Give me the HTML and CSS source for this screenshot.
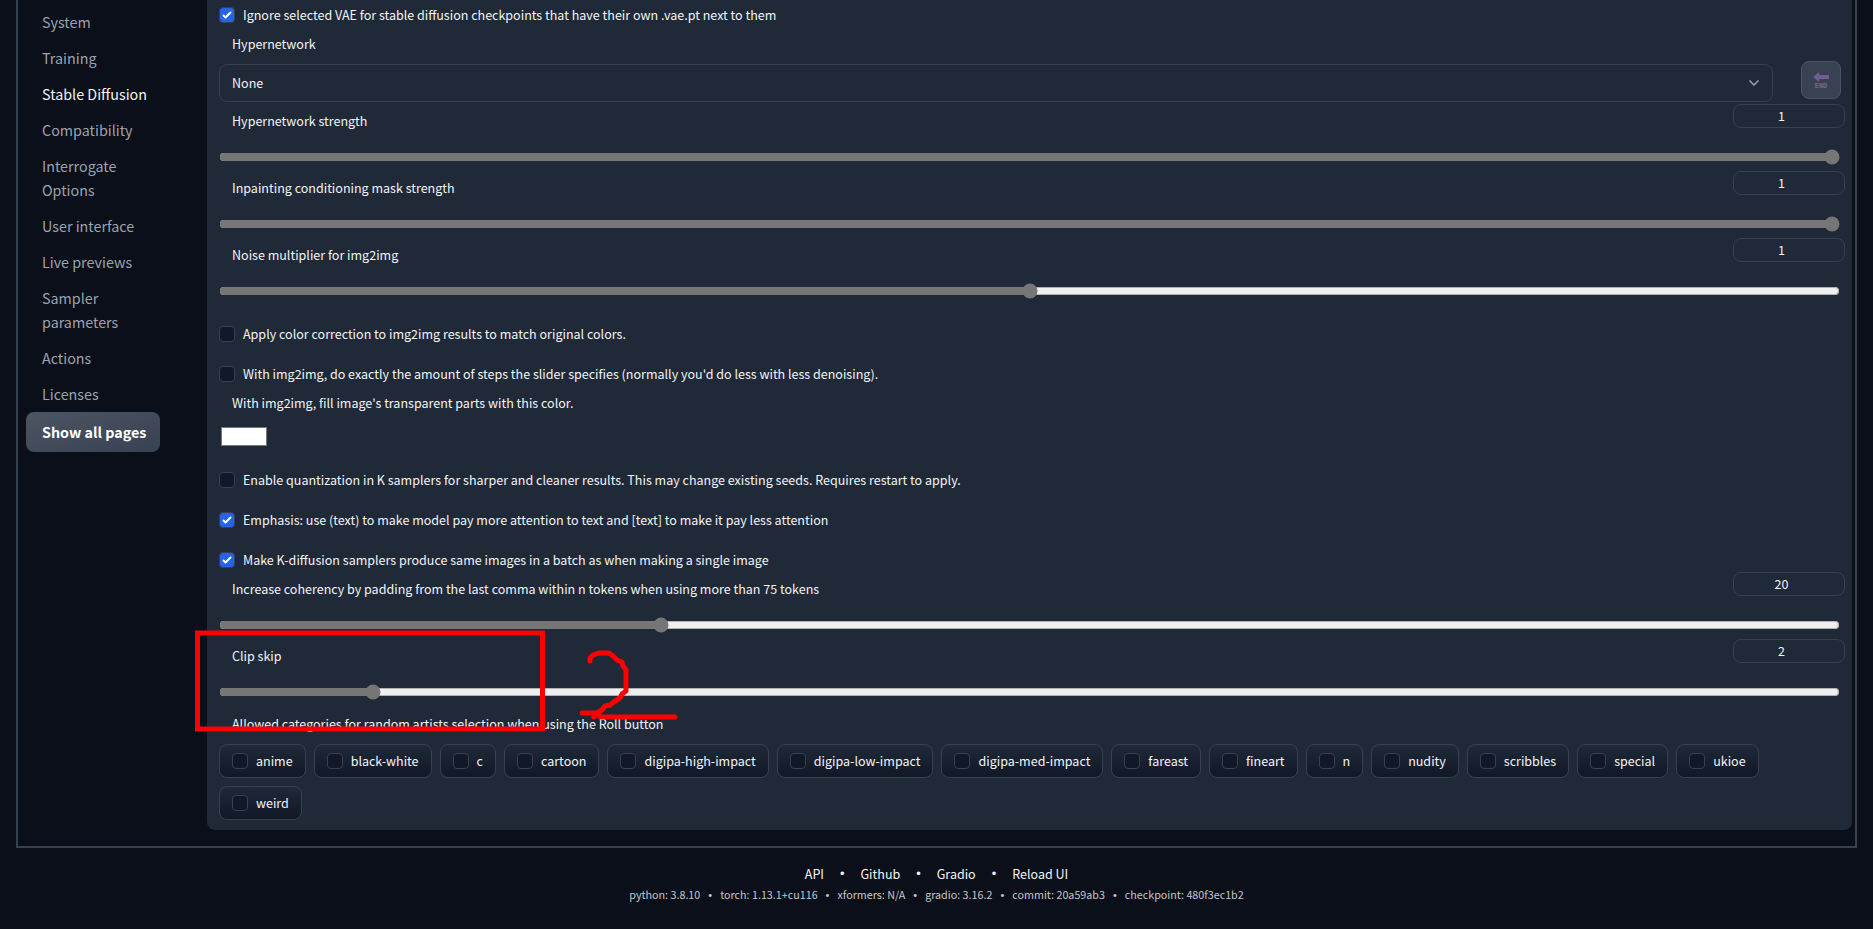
FILE: index.html
```html
<!DOCTYPE html>
<html lang="en">
<head>
  <meta charset="UTF-8" />
  <meta name="viewport" content="width=device-width, initial-scale=1.0"/>
  <title>Stable Diffusion</title>
  <link rel="stylesheet" href="styles.css">
</head>
<body>

<main class="settings">
  <nav class="tabs">
    <button>System</button>
    <button>Training</button>
    <button class="active">Stable Diffusion</button>
    <button>Compatibility</button>
    <button>Interrogate Options</button>
    <button>User interface</button>
    <button>Live previews</button>
    <button>Sampler parameters</button>
    <button>Actions</button>
    <button>Licenses</button>
    <button class="show-all">Show all pages</button>
  </nav>

  <section class="panel">
    <div class="checks">
      <label class="check"><input type="checkbox" checked> Ignore selected VAE for stable diffusion checkpoints that have their own .vae.pt next to them</label>
    </div>

    <label class="title" for="hypernetwork">Hypernetwork</label>
    <div class="select-row">
      <div class="select-wrap">
        <select id="hypernetwork">
          <option>None</option>
        </select>
        <svg class="chevron" width="12" height="8" viewBox="0 0 12 8"><path d="M1.5 1.5L6 6L10.5 1.5" fill="none" stroke="#9ca3af" stroke-width="1.5"/></svg>
      </div>
      <button class="tool" aria-label="Refresh">
        <svg width="18" height="20" viewBox="0 0 18 20">
          <path d="M1 7L7 2V5H17V9H7V12Z" fill="#6b5f95"/>
          <text x="9" y="18" text-anchor="middle">END</text>
        </svg>
      </button>
    </div>

    <div class="slider">
      <div class="slider-head">
        <label for="hyperStrength">Hypernetwork strength</label>
        <input type="number" value="1" aria-label="Hypernetwork strength value">
      </div>
      <input type="range" id="hyperStrength" min="0" max="1" step="0.01" value="1">
    </div>
    <div class="slider">
      <div class="slider-head">
        <label for="maskStrength">Inpainting conditioning mask strength</label>
        <input type="number" value="1" aria-label="Inpainting conditioning mask strength value">
      </div>
      <input type="range" id="maskStrength" min="0" max="1" step="0.01" value="1">
    </div>
    <div class="slider">
      <div class="slider-head">
        <label for="noise">Noise multiplier for img2img</label>
        <input type="number" value="1" aria-label="Noise multiplier value">
      </div>
      <input type="range" id="noise" min="0.5" max="1.5" step="0.01" value="1">
    </div>

    <div class="checks after-slider">
      <label class="check"><input type="checkbox"> Apply color correction to img2img results to match original colors.</label>
      <label class="check"><input type="checkbox"> With img2img, do exactly the amount of steps the slider specifies (normally you'd do less with less denoising).</label>
    </div>

    <label class="title" for="fillColor">With img2img, fill image's transparent parts with this color.</label>
    <input type="color" id="fillColor" value="#ffffff">

    <div class="checks">
      <label class="check"><input type="checkbox"> Enable quantization in K samplers for sharper and cleaner results. This may change existing seeds. Requires restart to apply.</label>
      <label class="check"><input type="checkbox" checked> Emphasis: use (text) to make model pay more attention to text and [text] to make it pay less attention</label>
      <label class="check"><input type="checkbox" checked> Make K-diffusion samplers produce same images in a batch as when making a single image</label>
    </div>

    <div class="slider first">
      <div class="slider-head">
        <label for="commaPadding">Increase coherency by padding from the last comma within n tokens when using more than 75 tokens</label>
        <input type="number" value="20" aria-label="Comma padding value">
      </div>
      <input type="range" id="commaPadding" min="0" max="74" value="20">
    </div>
    <div class="slider marked">
      <div class="slider-head">
        <label for="clipSkip">Clip skip</label>
        <input type="number" value="2" aria-label="Clip skip value">
      </div>
      <input type="range" id="clipSkip" min="1" max="12" value="2">
      <!-- red marker drawn over the setting -->
      <svg class="marker" width="490" height="110" viewBox="0 0 490 110">
        <rect x="2.5" y="3" width="345" height="96"/>
        <path d="M395 31V28L398 25L404 23H414L418 26L422 30L427 32L428 36L431 40V61L427 64L425 68L420 71L415 75L410 76L407 80L402 83L399 87M387 83H402L405 87H480"/>
      </svg>
    </div>

    <fieldset>
      <legend>Allowed categories for random artists selection when using the Roll button</legend>
      <div class="chips">
        <label class="chip"><input type="checkbox"> anime</label>
        <label class="chip"><input type="checkbox"> black-white</label>
        <label class="chip"><input type="checkbox"> c</label>
        <label class="chip"><input type="checkbox"> cartoon</label>
        <label class="chip"><input type="checkbox"> digipa-high-impact</label>
        <label class="chip"><input type="checkbox"> digipa-low-impact</label>
        <label class="chip"><input type="checkbox"> digipa-med-impact</label>
        <label class="chip"><input type="checkbox"> fareast</label>
        <label class="chip"><input type="checkbox"> fineart</label>
        <label class="chip"><input type="checkbox"> n</label>
        <label class="chip"><input type="checkbox"> nudity</label>
        <label class="chip"><input type="checkbox"> scribbles</label>
        <label class="chip"><input type="checkbox"> special</label>
        <label class="chip"><input type="checkbox"> ukioe</label>
        <label class="chip"><input type="checkbox"> weird</label>
      </div>
    </fieldset>
  </section>
</main>

<footer>
  <div class="links">
    <a href="#">API</a>
    <span class="dot">•</span>
    <a href="#">Github</a>
    <span class="dot">•</span>
    <a href="#">Gradio</a>
    <span class="dot">•</span>
    <a href="#">Reload UI</a>
  </div>
  <div class="versions">
    <span>python: 3.8.10</span>
    <span class="dot">•</span>
    <span>torch: 1.13.1+cu116</span>
    <span class="dot">•</span>
    <span>xformers: N/A</span>
    <span class="dot">•</span>
    <span>gradio: 3.16.2</span>
    <span class="dot">•</span>
    <span>commit: 20a59ab3</span>
    <span class="dot">•</span>
    <span>checkpoint: 480f3ec1b2</span>
  </div>
</footer>

</body>
</html>
```
FILE: styles.css
```css
* {
  box-sizing: border-box;
}
body {
  margin: 0;
  background: #0b0f19;
  color: #f3f4f6;
  font-family: 'Source Sans Pro', 'Noto Sans CJK SC', sans-serif;
  font-size: 14px;
  font-size-adjust: 0.486; /* keep the x-height of Source Sans on fallback fonts */
  line-height: 20px;
}
button, input, select {
  font: inherit;
  font-size-adjust: inherit;
  color: inherit;
}
.settings {
  display: flex;
  margin: 0 16px;
  padding: 0 3px 16px 8px;
  border: 2px solid #374151;
  border-top: none;
}
.tabs {
  width: 134px;
  margin-right: 47px;
  padding-top: 4px;
  flex-shrink: 0;
}
.tabs button {
  display: block;
  width: 100%;
  padding: 6px 12px 6px 16px;
  border: none;
  background: none;
  color: #9ca3af;
  font-size: 16px;
  line-height: 24px;
  text-align: left;
  cursor: pointer;
}
.tabs button.active {
  color: #f3f4f6;
}
.tabs button.show-all {
  padding: 8px 0 8px 16px;
  border-radius: 8px;
  background: linear-gradient(to bottom right, #4b5563, #374151);
  color: white;
  font-weight: bold;
}
.panel {
  flex: 1;
  min-width: 0;
  padding: 5px 7px 10px 12px;
  background: #1f2937;
  border-radius: 0 0 8px 8px;
}
.checks {
  display: flex;
  flex-direction: column;
  gap: 20px;
}
.checks.after-slider {
  margin-top: 25px;
}
.check {
  display: flex;
  align-items: center;
  gap: 8px;
}
input[type="checkbox"] {
  appearance: none;
  flex-shrink: 0;
  width: 16px;
  height: 16px;
  margin: 0;
  border: 1px solid #374151;
  border-radius: 4px;
  background: #111827;
}
input[type="checkbox"]:checked {
  background: #2563eb url("data:image/svg+xml,%3Csvg viewBox='0 0 16 16' fill='white' xmlns='http://www.w3.org/2000/svg'%3E%3Cpath d='M12.207 4.793a1 1 0 010 1.414l-5 5a1 1 0 01-1.414 0l-2-2a1 1 0 011.414-1.414L6.5 9.086l4.293-4.293a1 1 0 011.414 0z'/%3E%3C/svg%3E") center / 16px;
}
.title {
  display: block;
  margin: 9px 0 0 13px;
}
.select-row {
  display: flex;
  align-items: flex-start;
  gap: 28px;
  margin-top: 7px;
  padding-right: 4px;
}
.select-wrap {
  position: relative;
  flex: 1;
  margin-top: 3px;
}
select {
  display: block;
  appearance: none;
  width: 100%;
  height: 38px;
  padding: 0 12px;
  border: 1px solid #374151;
  border-radius: 8px;
  background: #1f2937;
}
.chevron {
  position: absolute;
  right: 13px;
  top: 15px;
  pointer-events: none;
}
.tool {
  display: flex;
  align-items: center;
  justify-content: center;
  width: 40px;
  height: 38px;
  padding: 0;
  border: 1px solid #4b5563;
  border-radius: 8px;
  background: #384252;
}
.tool text {
  fill: #6f6a90;
  font: bold 7px 'Liberation Mono', monospace;
  font-size-adjust: none;
}
.slider {
  margin-bottom: 6px;
}
.select-row + .slider, .slider.first {
  margin-top: 2px;
}
.slider-head {
  display: flex;
  justify-content: space-between;
  height: 28px;
}
.slider-head label {
  padding: 7px 0 0 13px;
}
input[type="number"] {
  width: 112px;
  height: 24px;
  padding: 0 8px 2px;
  border: 1px solid #374151;
  border-radius: 8px;
  background: #1f2937;
  text-align: center;
}
input[type="range"] {
  display: block;
  width: calc(100% - 5px);
  height: 16px;
  margin: 17px 0 0;
  accent-color: #767676;
}
.marked {
  position: relative;
}
.marker {
  position: absolute;
  left: -24px;
  top: -9px;
  pointer-events: none;
  fill: none;
  stroke: red;
  stroke-width: 5px;
}
.marker path {
  stroke-linecap: round;
  stroke-linejoin: round;
}
input[type="color"] {
  display: block;
  width: 46px;
  height: 19px;
  margin: 14px 0 24px 2px;
  padding: 0;
  border: none;
  background: none;
}
input[type="color"]::-webkit-color-swatch-wrapper {
  padding: 0;
}
input[type="color"]::-webkit-color-swatch {
  border: 1px solid #777;
}
fieldset {
  margin: 14px 0 0;
  padding: 0;
  border: none;
}
legend {
  padding: 0 0 0 13px;
}
.chips {
  display: flex;
  flex-wrap: wrap;
  gap: 8px;
  margin-top: 10px;
}
.chip {
  display: flex;
  align-items: center;
  gap: 8px;
  height: 34px;
  padding: 0 12px;
  border: 1px solid #374151;
  border-radius: 8px;
  background: linear-gradient(to bottom, #1f2937, #111827);
}
footer {
  padding-top: 16px;
}
.links, .versions {
  display: flex;
  justify-content: center;
}
.links {
  gap: 16px;
}
.links a {
  color: #f3f4f6;
  text-decoration: none;
}
.versions {
  gap: 8px;
  margin-top: 1px;
  color: #c5c7cb;
  font-size: 12px;
}
.dot {
  font-family: 'Liberation Sans', sans-serif;
}
```
